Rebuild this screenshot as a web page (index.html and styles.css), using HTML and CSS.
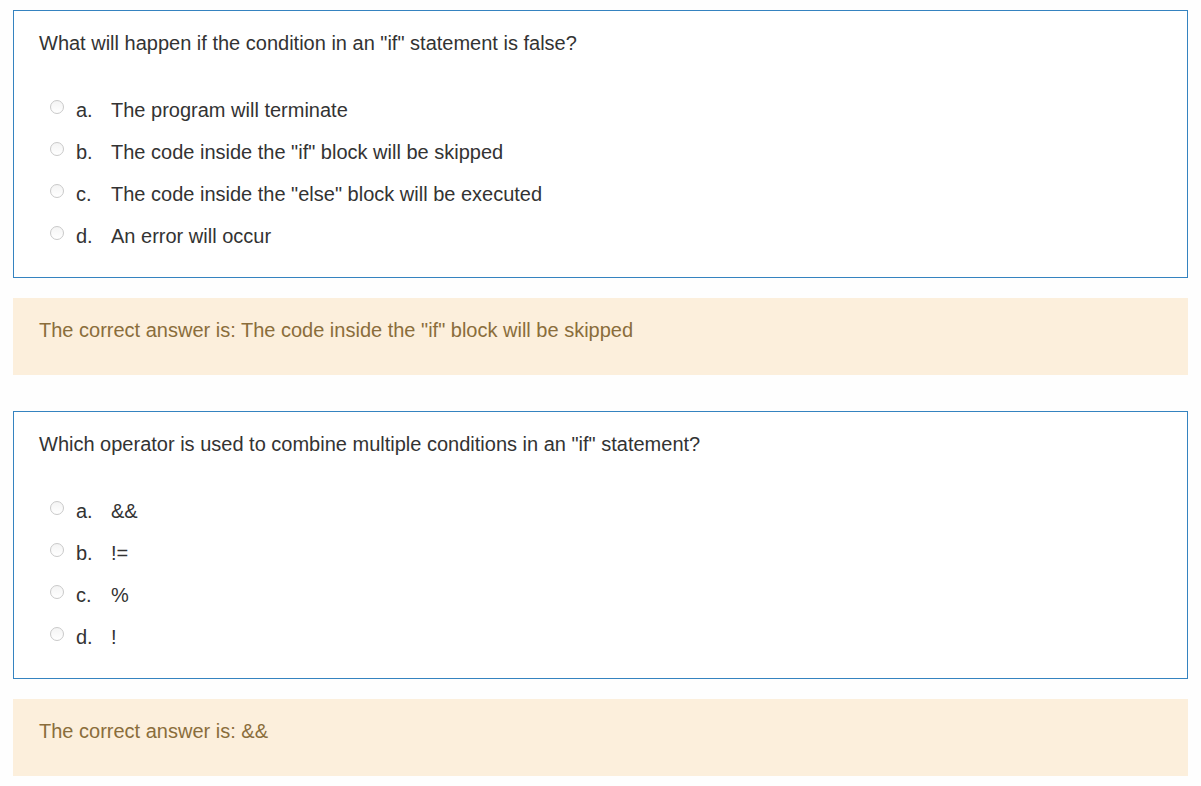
FILE: index.html
```html
<!DOCTYPE html>
<html>
<head>
<meta charset="utf-8">
<link rel="stylesheet" href="styles.css">
</head>
<body>
<div class="page">
  <div class="que">
    <div class="qtext">What will happen if the condition in an "if" statement is false?</div>
    <div class="answers">
      <div class="opt"><span class="radio"></span><span class="letter">a.</span><span class="atext">The program will terminate</span></div>
      <div class="opt"><span class="radio"></span><span class="letter">b.</span><span class="atext">The code inside the "if" block will be skipped</span></div>
      <div class="opt"><span class="radio"></span><span class="letter">c.</span><span class="atext">The code inside the "else" block will be executed</span></div>
      <div class="opt"><span class="radio"></span><span class="letter">d.</span><span class="atext">An error will occur</span></div>
    </div>
  </div>
  <div class="outcome">The correct answer is: The code inside the "if" block will be skipped</div>

  <div class="que second">
    <div class="qtext">Which operator is used to combine multiple conditions in an "if" statement?</div>
    <div class="answers">
      <div class="opt"><span class="radio"></span><span class="letter">a.</span><span class="atext">&amp;&amp;</span></div>
      <div class="opt"><span class="radio"></span><span class="letter">b.</span><span class="atext">!=</span></div>
      <div class="opt"><span class="radio"></span><span class="letter">c.</span><span class="atext">%</span></div>
      <div class="opt"><span class="radio"></span><span class="letter">d.</span><span class="atext">!</span></div>
    </div>
  </div>
  <div class="outcome">The correct answer is: &amp;&amp;</div>
</div>
</body>
</html>
```

FILE: styles.css
```css
html, body {
  margin: 0;
  padding: 0;
  background: #fefefe;
}
body {
  font-family: "Liberation Sans", Arial, sans-serif;
  font-size: 20px;
  color: #333333;
}
.page {
  padding: 10px 13px 0 13px;
  display: flex;
  flex-direction: column;
}
.que {
  border: 1px solid #3583c0;
  padding: 19px 25px 20px 25px;
  background: #ffffff;
}
.que.second {
  margin-top: 36px;
}
.qtext {
  line-height: 26px;
  height: 26px;
  margin-bottom: 33px;
}
.answers {
  display: flex;
  flex-direction: column;
}
.opt {
  height: 42px;
  display: flex;
  align-items: center;
  padding-left: 11px;
}
.radio {
  width: 12px;
  height: 12px;
  border-radius: 50%;
  border: 1px solid #c9c9c9;
  background: linear-gradient(#f4f4f4, #ffffff);
  margin-right: 12px;
  position: relative;
  top: -3px;
  flex: none;
}
.letter {
  width: 35px;
  flex: none;
}
.atext {
  white-space: nowrap;
}
.outcome {
  margin-top: 20px;
  background: #fcefdc;
  color: #8a6d3b;
  line-height: 26px;
  padding: 19px 25px 32px 26px;
}
```
